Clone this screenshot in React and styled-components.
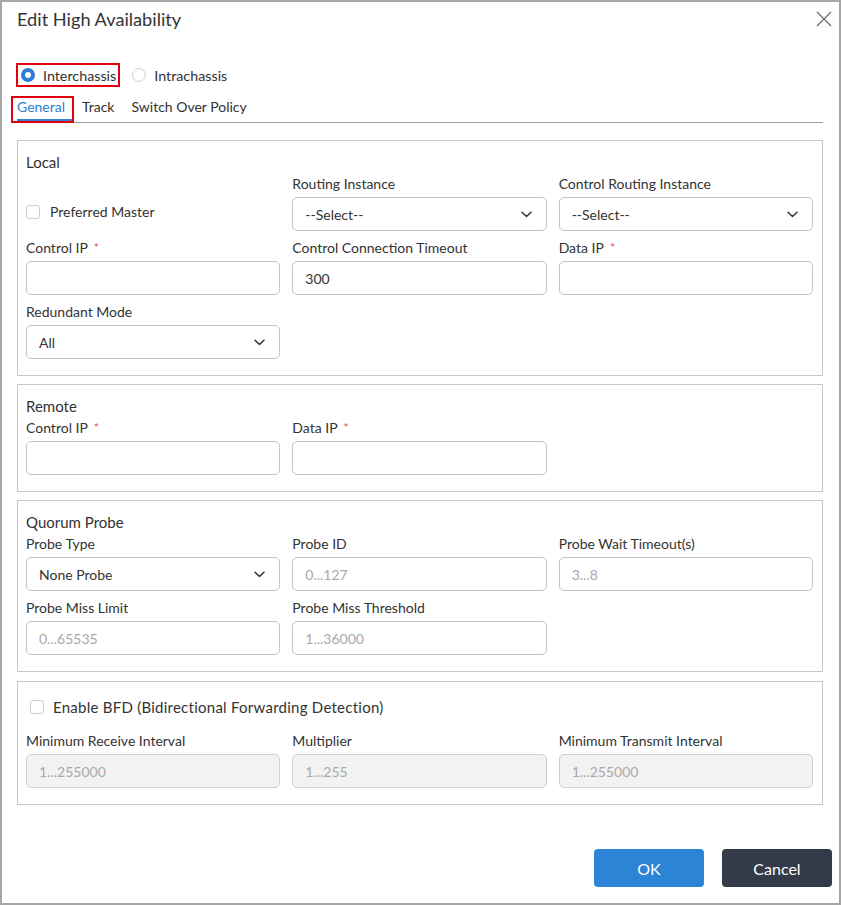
import React from "react";
import styled, { createGlobalStyle } from "styled-components";

const Global = createGlobalStyle`
  html, body { margin: 0; padding: 0; background: #fff; }
  body { font-family: Lato, "Open Sans", "Liberation Sans", sans-serif; color: #333; }
  * { box-sizing: border-box; }
`;

const Frame = styled.div`
  width: 841px;
  height: 905px;
  border: 2px solid #a6a6a6;
  background: #fff;
  display: flex;
  flex-direction: column;
`;

const Header = styled.div`
  display: flex;
  align-items: center;
  justify-content: space-between;
  padding: 5px 7px 0 15px;
`;

const Title = styled.h1`
  margin: 0;
  font-size: 18.2px;
  font-weight: 400;
  line-height: 24px;
  color: #333;
`;

const CloseButton = styled.button`
  border: 0;
  background: none;
  padding: 0;
  width: 16px;
  height: 16px;
  display: flex;
  cursor: pointer;
`;

const Body = styled.div`
  padding: 0 16px 0 15px;
  display: flex;
  flex-direction: column;
`;

const RadioGroup = styled.div`
  display: flex;
  gap: 7px;
  margin-top: 32px;
  margin-left: -1px;
`;

const RadioLabel = styled.label`
  display: inline-flex;
  align-items: center;
  gap: 8px;
  height: 24px;
  padding: 0 2px 0 3px;
  border: 2px solid ${(p) => (p.$marked ? "#e3000f" : "transparent")};
  font-size: 14.3px;
  color: #333;
`;

const RadioDot = styled.span`
  width: 14px;
  height: 14px;
  border-radius: 50%;
  background: #fff;
  border: ${(p) => (p.$checked ? "4px solid #2b7fd4" : "1px solid #cfcfcf")};
`;

const TabList = styled.div`
  display: flex;
  margin-top: 9px;
  border-bottom: 1px solid #9e9e9e;
`;

const Tab = styled.div`
  position: relative;
  padding: 0 8px 2px 0;
  margin-right: 9px;
  line-height: 21px;
  font-size: 14px;
  color: ${(p) => (p.$active ? "#2b7fd4" : "#333")};
  border-bottom: 3px solid ${(p) => (p.$active ? "#2b7fd4" : "transparent")};

  ${(p) =>
    p.$marked &&
    `
    &::after {
      content: "";
      position: absolute;
      left: -6px;
      right: -1px;
      top: 0;
      height: 23px;
      border: 2px solid #e3000f;
    }
  `}
`;

const Sections = styled.div`
  display: flex;
  flex-direction: column;
  gap: 8px;
  margin-top: 17px;
`;

const Section = styled.section`
  border: 1px solid #c6c6c6;
  padding: ${(p) => p.$top || 12}px 9px 16px 8px;
  margin-top: ${(p) => p.$shift || 0}px;
`;

const Heading = styled.div`
  font-size: 15px;
  line-height: 18px;
  margin-bottom: 4px;
  color: #333;
`;

const Grid = styled.div`
  display: grid;
  grid-template-columns: repeat(3, 1fr);
  column-gap: 12px;
  row-gap: 8px;
`;

const Field = styled.div`
  display: flex;
  flex-direction: column;
  min-width: 0;
`;

const Label = styled.div`
  display: flex;
  align-items: center;
  height: 18px;
  font-size: 14px;
  line-height: 18px;
  margin-bottom: 4px;
  color: #333;
  white-space: nowrap;
`;

const Req = styled.span`
  color: #e8475a;
  font-size: 12px;
  line-height: 1;
  margin-left: 6px;
`;

const Input = styled.input`
  height: 34px;
  width: 100%;
  border: 1px solid ${(p) => (p.disabled ? "#d0d0d0" : "#c4c4c4")};
  border-radius: 5px;
  padding: 0 12px;
  font-family: inherit;
  font-size: 14px;
  color: #333;
  background: ${(p) => (p.disabled ? "#f2f2f2" : "#fff")};
  outline: none;

  &::placeholder {
    color: #a9a9a9;
  }
`;

const SelectBox = styled.div`
  height: 34px;
  border: 1px solid #c4c4c4;
  border-radius: 5px;
  padding: 0 14px 0 12px;
  display: flex;
  align-items: center;
  justify-content: space-between;
  font-size: 14px;
  color: #333;
  background: #fff;
`;

const CheckCell = styled.div`
  align-self: end;
  height: 34px;
  padding-bottom: 5px;
  display: flex;
  align-items: center;
  gap: 10px;
  font-size: 14px;
  color: #333;
`;

const CheckRow = styled.div`
  display: flex;
  align-items: center;
  gap: 9px;
  padding-left: ${(p) => p.$indent || 0}px;
  margin-bottom: 16px;
  font-size: 15px;
  letter-spacing: 0.25px;
  line-height: 18px;
  color: #333;
`;

const Box = styled.span`
  width: 14px;
  height: 14px;
  border: 1px solid #cdcdcd;
  border-radius: 3px;
  background: #fff;
  flex: none;
`;

const Footer = styled.div`
  margin-top: auto;
  display: flex;
  justify-content: flex-end;
  gap: 18px;
  padding: 0 7px 16px 0;
`;

const Button = styled.button`
  width: 110px;
  height: 38px;
  border: 0;
  border-radius: 4px;
  font-family: inherit;
  font-size: 16px;
  color: #fff;
  background: ${(p) => (p.$primary ? "#2b84d6" : "#333a48")};
  cursor: pointer;
`;

const Chevron = () => (
  <svg width="11" height="7" viewBox="0 0 11 7" fill="none">
    <path d="M1 1.2 L5.5 5.5 L10 1.2" stroke="#333" strokeWidth="1.5" strokeLinecap="round" strokeLinejoin="round" />
  </svg>
);

const Select = ({ value }) => (
  <SelectBox>
    <span>{value}</span>
    <Chevron />
  </SelectBox>
);

const F = ({ label, req, children }) => (
  <Field>
    <Label>
      {label}
      {req && <Req>*</Req>}
    </Label>
    {children}
  </Field>
);

export default function App() {
  return (
    <>
      <Global />
      <Frame>
        <Header>
          <Title>Edit High Availability</Title>
          <CloseButton aria-label="Close">
            <svg width="16" height="16" viewBox="0 0 16 16">
              <path d="M1 1 L15 15 M15 1 L1 15" stroke="#6f6f6f" strokeWidth="1.4" />
            </svg>
          </CloseButton>
        </Header>
        <Body>
          <RadioGroup>
            <RadioLabel $marked>
              <RadioDot $checked />
              Interchassis
            </RadioLabel>
            <RadioLabel>
              <RadioDot />
              Intrachassis
            </RadioLabel>
          </RadioGroup>
          <TabList>
            <Tab $active $marked>General</Tab>
            <Tab>Track</Tab>
            <Tab>Switch Over Policy</Tab>
          </TabList>
          <Sections>
            <Section>
              <Heading>Local</Heading>
              <Grid>
                <CheckCell>
                  <Box />
                  Preferred Master
                </CheckCell>
                <F label="Routing Instance">
                  <Select value="--Select--" />
                </F>
                <F label="Control Routing Instance">
                  <Select value="--Select--" />
                </F>
                <F label="Control IP" req>
                  <Input />
                </F>
                <F label="Control Connection Timeout">
                  <Input defaultValue="300" />
                </F>
                <F label="Data IP" req>
                  <Input />
                </F>
                <F label="Redundant Mode">
                  <Select value="All" />
                </F>
              </Grid>
            </Section>
            <Section>
              <Heading>Remote</Heading>
              <Grid>
                <F label="Control IP" req>
                  <Input />
                </F>
                <F label="Data IP" req>
                  <Input />
                </F>
              </Grid>
            </Section>
            <Section>
              <Heading>Quorum Probe</Heading>
              <Grid>
                <F label="Probe Type">
                  <Select value="None Probe" />
                </F>
                <F label="Probe ID">
                  <Input placeholder="0...127" />
                </F>
                <F label="Probe Wait Timeout(s)">
                  <Input placeholder="3...8" />
                </F>
                <F label="Probe Miss Limit">
                  <Input placeholder="0...65535" />
                </F>
                <F label="Probe Miss Threshold">
                  <Input placeholder="1...36000" />
                </F>
              </Grid>
            </Section>
            <Section $top={16} $shift={1}>
              <CheckRow $indent={4}>
                <Box />
                Enable BFD (Bidirectional Forwarding Detection)
              </CheckRow>
              <Grid>
                <F label="Minimum Receive Interval">
                  <Input disabled placeholder="1...255000" />
                </F>
                <F label="Multiplier">
                  <Input disabled placeholder="1...255" />
                </F>
                <F label="Minimum Transmit Interval">
                  <Input disabled placeholder="1...255000" />
                </F>
              </Grid>
            </Section>
          </Sections>
        </Body>
        <Footer>
          <Button $primary>OK</Button>
          <Button>Cancel</Button>
        </Footer>
      </Frame>
    </>
  );
}
